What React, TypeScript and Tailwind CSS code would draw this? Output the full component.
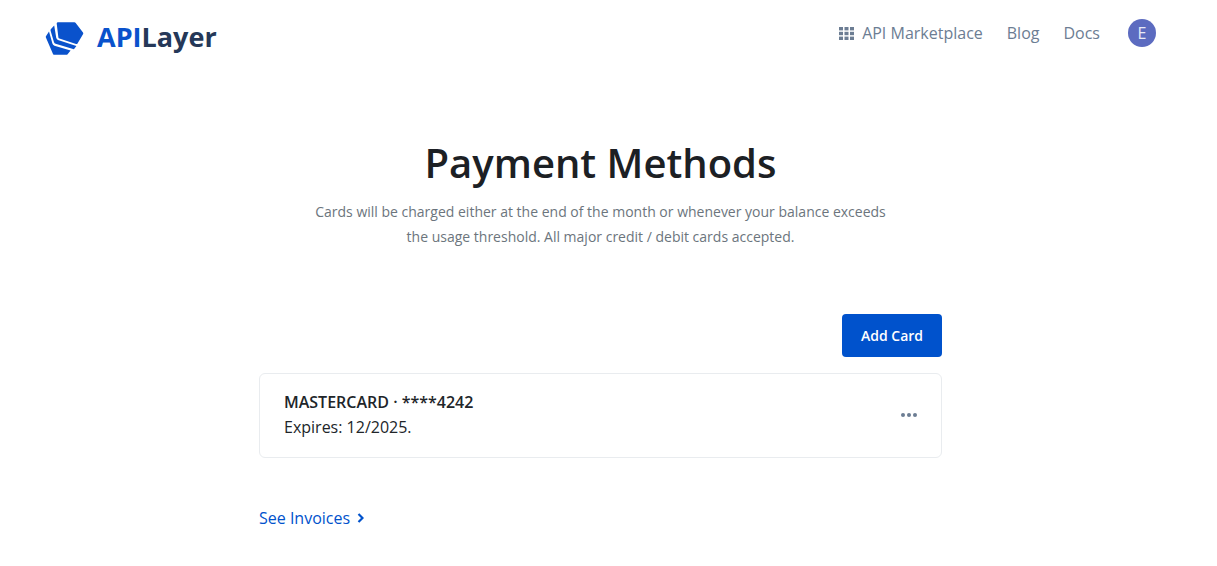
import React from "react";

function Logo() {
  return (
    <svg width="40" height="34" viewBox="0 0 40 34" className="shrink-0" fill="#0a52cc" strokeLinejoin="round">
      {/* bottom layer */}
      <path d="M4 9.4 L7.4 21.6 Q7.8 23.2 9.4 23.7 L25.6 28.6 L22.4 32.4 Q22 32.8 21.4 32.8 L9.4 32.8 Q8.4 32.8 8 31.9 L0.9 15.6 Q0.5 14.7 1.1 13.9 Z" />
      {/* middle layer */}
      <path d="M9.2 3.6 L11.2 15.8 Q11.5 17.4 13 17.9 L31.4 24 L28.9 27.2 L10.6 21.8 Q9.4 21.4 9 20.2 L5.6 8.8 Q5.3 7.8 6 7.1 Z" />
      {/* top plate */}
      <path d="M11.7 1.4 Q11.8 0.3 13 0.3 L29.4 0.3 Q30.2 0.3 30.7 1 L38 10.4 Q38.6 11.3 38 12.2 L32.5 21.4 Q32 22.3 31 22 L14.4 16.6 Q13.5 16.3 13.4 15.4 Z" />
    </svg>
  );
}

function GridIcon() {
  return (
    <svg width="15" height="13" viewBox="0 0 15 13" className="shrink-0" fill="#6c7d93">
      <rect x="0" y="0" width="4" height="3.4" />
      <rect x="5.5" y="0" width="4" height="3.4" />
      <rect x="11" y="0" width="4" height="3.4" />
      <rect x="0" y="4.8" width="4" height="3.4" />
      <rect x="5.5" y="4.8" width="4" height="3.4" />
      <rect x="11" y="4.8" width="4" height="3.4" />
      <rect x="0" y="9.6" width="4" height="3.4" />
      <rect x="5.5" y="9.6" width="4" height="3.4" />
      <rect x="11" y="9.6" width="4" height="3.4" />
    </svg>
  );
}

export default function App() {
  return (
    <div className="min-h-[566px] w-[1201px] bg-white font-['Open_Sans','Noto_Sans',sans-serif]">
      {/* Header */}
      <header className="flex h-[66px] items-center justify-between px-[45px]">
        <div className="flex items-center gap-[12px] pt-[12px]">
          <Logo />
          <span className="pb-[6px] text-[27px] leading-none font-bold">
            <span className="text-[#0a52cc]">API</span>
            <span className="text-[#253858]">Layer</span>
          </span>
        </div>
        <nav className="flex items-center text-[16px] text-[#6c7d93]">
          <a className="flex items-center gap-[8px]">
            <GridIcon />
            API Marketplace
          </a>
          <a className="ml-[24px]">Blog</a>
          <a className="ml-[24px]">Docs</a>
          <div className="ml-[28px] flex h-[28px] w-[28px] items-center justify-center rounded-full bg-[#5c6bc0] text-[16px] text-[#e8eaf6]">
            E
          </div>
        </nav>
      </header>

      {/* Title */}
      <div className="pt-[66px] text-center">
        <h1 className="text-[40px] leading-[62px] font-semibold text-[#1c2024]">Payment Methods</h1>
        <p className="mt-[5px] text-[14px] leading-[25px] text-[#6c757d]">
          Cards will be charged either at the end of the month or whenever your balance exceeds
          <br />
          the usage threshold. All major credit / debit cards accepted.
        </p>
      </div>

      {/* Cards */}
      <main className="mx-auto mt-[65px] w-[683px]">
        <div className="flex justify-end">
          <button className="h-[43px] w-[100px] rounded-[4px] bg-[#0052cc] text-[14px] font-semibold text-white">
            Add Card
          </button>
        </div>
        <div className="mt-[16px] flex h-[85px] items-center justify-between rounded-[6px] border border-[#e9ecef] pl-[24px] pr-[24px]">
          <div className="-mt-[2px] text-[16px] leading-[25px] text-[#212529]">
            <div className="font-semibold">MASTERCARD · ****4242</div>
            <div>Expires: 12/2025.</div>
          </div>
          <svg width="16" height="4" viewBox="0 0 16 4" fill="#6c7d93" className="-mt-[2px]">
            <circle cx="2" cy="2" r="2" />
            <circle cx="8" cy="2" r="2" />
            <circle cx="14" cy="2" r="2" />
          </svg>
        </div>
        <a className="mt-[48px] flex items-center gap-[7px] text-[16px] leading-[24px] text-[#0052cc]">
          See Invoices
          <svg width="7" height="10" viewBox="0 0 7 10" fill="none" stroke="#0052cc" strokeWidth="2.2">
            <path d="M1.5 1 L5.5 5 L1.5 9" />
          </svg>
        </a>
      </main>
    </div>
  );
}
